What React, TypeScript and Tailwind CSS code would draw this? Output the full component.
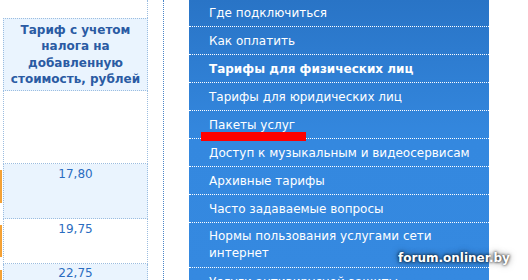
const items: { t: string; b?: boolean; two?: boolean }[] = [
  { t: "Где подключиться" },
  { t: "Как оплатить" },
  { t: "Тарифы для физических лиц", b: true },
  { t: "Тарифы для юридических лиц" },
  { t: "Пакеты услуг" },
  { t: "Доступ к музыкальным и видеосервисам" },
  { t: "Архивные тарифы" },
  { t: "Часто задаваемые вопросы" },
  { t: "Нормы пользования услугами сети интернет", two: true },
  { t: "Услуги антивирусной защиты" },
];

export default function App() {
  return (
    <div
      className="relative flex h-[280px] w-[528px] overflow-hidden bg-white"
      style={{ fontFamily: '"DejaVu Sans", Verdana, sans-serif' }}
    >
      <div className="flex h-full w-[164px] shrink-0 border-r border-dotted border-[#4a86c8]">
        <div className="flex w-[3px] shrink-0 flex-col">
          <div className="h-[170px] shrink-0" />
          <div className="h-[33px] w-[2px] shrink-0 bg-[#f3a136]" />
          <div className="h-[22px] shrink-0" />
          <div className="h-[32px] w-[2px] shrink-0 bg-[#f3a136]" />
          <div className="h-[13px] shrink-0" />
          <div className="h-[12px] w-[2px] shrink-0 bg-[#f3a136]" />
        </div>
        <div className="flex w-[145px] shrink-0 flex-col">
          <div className="h-[18px] shrink-0 border-r border-dotted border-[#9bbde0]" />
          <div className="flex h-[73px] shrink-0 items-center justify-center border border-dotted border-[#9bbde0] bg-[#eaf4fe] text-center text-[12px] font-bold leading-[16.5px] text-[#2a5ba3]">
            <span>
              Тариф с учетом
              <br />
              налога на
              <br />
              добавленную
              <br />
              стоимость, рублей
            </span>
          </div>
          <div className="h-[73px] shrink-0 border-x border-b border-dotted border-[#9bbde0]" />
          <div className="h-[55px] shrink-0 border-x border-b border-dotted border-[#9bbde0] bg-[#eaf4fe] pt-[2px] text-center text-[12px] leading-[16px] text-[#2a6cc0]">
            17,80
          </div>
          <div className="h-[45px] shrink-0 border-x border-b border-dotted border-[#9bbde0] pt-[2px] text-center text-[12px] leading-[16px] text-[#2a6cc0]">
            19,75
          </div>
          <div className="h-[40px] shrink-0 border-x border-dotted border-[#9bbde0] bg-[#eaf4fe] pt-[1px] text-center text-[12px] leading-[16px] text-[#2a6cc0]">
            22,75
          </div>
        </div>
      </div>
      <div className="w-[25px] shrink-0" />
      <div className="flex h-full w-[300px] shrink-0 flex-col bg-[linear-gradient(to_bottom,#2974c6_0%,#3488df_50%,#3589e0_100%)] text-[12px] text-white">
        <div className="-mt-[1px] flex flex-col">
          {items.map((it) => (
            <div
              key={it.t}
              className={`flex shrink-0 items-center border-b border-dotted border-white pl-[20px] pr-[10px] ${
                it.two ? "h-[45px] leading-[17px]" : "h-[28px]"
              } ${it.b ? "font-bold" : ""}`}
            >
              {it.two ? (
                <span>
                  Нормы пользования услугами сети
                  <br />
                  интернет
                </span>
              ) : (
                it.t
              )}
            </div>
          ))}
        </div>
      </div>
      <div className="absolute left-[201px] top-[132px] h-[9px] w-[105px] bg-[#ff0000]" />
      <div className="absolute left-[398px] top-[249px] text-[12px] font-bold leading-[18px] text-white [text-shadow:0_0_3px_#000,0_0_7px_rgba(0,0,0,0.6)]">
        forum.onliner.by
      </div>
    </div>
  );
}
